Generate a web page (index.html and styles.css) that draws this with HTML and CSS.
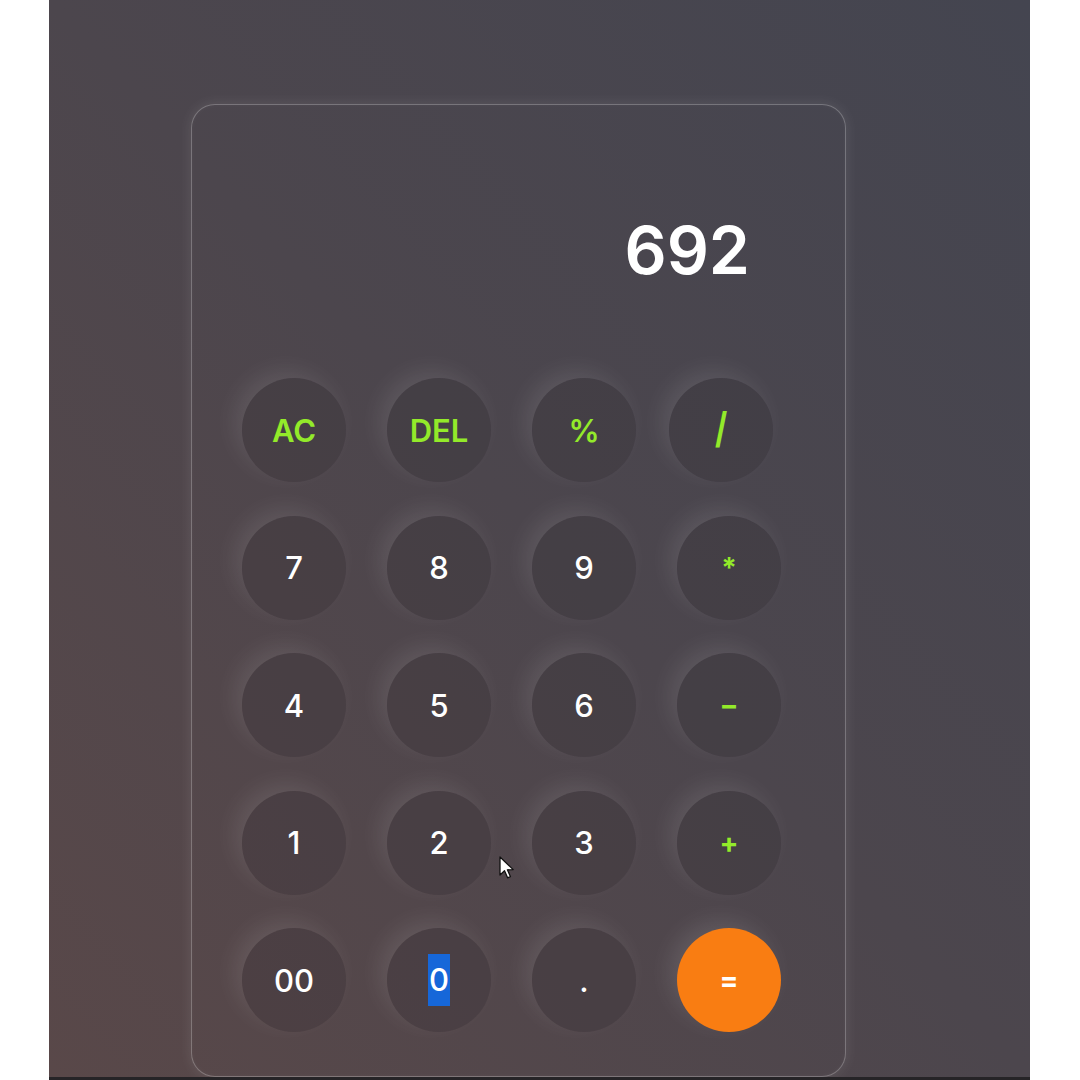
FILE: index.html
```html
<!DOCTYPE html>
<html>
<head>
<meta charset="utf-8">
<link rel="stylesheet" href="styles.css">
</head>
<body>
<div class="screen">
  <div class="stage">
    <div class="calc">
      <div class="display">692</div>
      <div class="keys">
        <button class="key op">AC</button>
        <button class="key op">DEL</button>
        <button class="key op">%</button>
        <button class="key op slash"><span class="slash-glyph">/</span></button>
        <button class="key">7</button>
        <button class="key">8</button>
        <button class="key">9</button>
        <button class="key op small">*</button>
        <button class="key">4</button>
        <button class="key">5</button>
        <button class="key">6</button>
        <button class="key op small">−</button>
        <button class="key">1</button>
        <button class="key">2</button>
        <button class="key">3</button>
        <button class="key op small">+</button>
        <button class="key">00</button>
        <button class="key"><span class="sel">0</span></button>
        <button class="key">.</button>
        <button class="key equal">=</button>
      </div>
    </div>
    <svg class="cursor" width="18" height="26" viewBox="0 0 18 26">
      <path d="M1 1 L1 19 L5.5 14.8 L8.6 21.8 L11.4 20.6 L8.4 13.8 L14.2 13.6 Z" fill="#fff" stroke="#111" stroke-width="1.3" stroke-linejoin="round"/>
    </svg>
  </div>
  <div class="bottombar"></div>
</div>
</body>
</html>
```

FILE: styles.css
```css
* { box-sizing: border-box; }
html, body { margin: 0; padding: 0; }
body {
  background: #ffffff;
  width: 1080px;
  height: 1080px;
  overflow: hidden;
  font-family: "Inter", "Open Sans", sans-serif;
}
.screen {
  margin: 0 50px 0 49px;
  height: 1080px;
  display: flex;
  flex-direction: column;
}
.stage {
  position: relative;
  flex: 1;
  background: linear-gradient(to top right, #594849 0%, #4c464d 50%, #444550 100%);
  padding: 104px 0 0 142px;
  overflow: hidden;
}
.bottombar {
  height: 3px;
  background: #262427;
}
.calc {
  width: 655px;
  height: 973px;
  border: 1.5px solid rgba(255,255,255,0.26);
  border-radius: 24px;
  background: rgba(255,255,255,0.005);
  box-shadow: 0 0 12px 2px rgba(255,255,255,0.08), inset 0 0 6px rgba(255,255,255,0.03);
  padding: 0 66px 0 50px;
}
.display {
  height: 273px;
  padding: 105px 29px 0 0;
  text-align: right;
  color: #ffffff;
  font-size: 66px;
  font-weight: 600;
  line-height: 80px;
  letter-spacing: 0;
}
.keys {
  display: grid;
  grid-template-columns: repeat(4, 104px);
  grid-auto-rows: 104px;
  column-gap: 41px;
  row-gap: 33.5px;
}
.key {
  width: 104px;
  height: 104px;
  border-radius: 50%;
  border: none;
  background: rgba(40, 34, 42, 0.2);
  box-shadow: -8px -8px 22px rgba(255,255,255,0.09);
  color: #ffffff;
  font-family: "Inter", "Open Sans", sans-serif;
  font-size: 31px;
  font-weight: 500;
  display: flex;
  align-items: center;
  justify-content: center;
  padding: 0;
}
.key.op {
  color: #93ea2a;
  font-weight: 600;
}
.key.small { font-size: 28px; font-weight: 700; }
.key.slash {
  transform: translateX(-8px);
}
.slash-glyph {
  display: inline-block;
  font-size: 42px;
  font-weight: 700;
  transform: scaleX(0.75);
  margin-top: -6px;
}
.key.equal {
  background: #f97d12;
  box-shadow: -8px -8px 22px rgba(255,255,255,0.1);
  font-size: 28px;
  font-weight: 700;
}
.sel {
  display: inline-block;
  background: #1667d9;
  line-height: 52px;
  padding: 0 1px;
}
.cursor {
  position: absolute;
  left: 450px;
  top: 856px;
}
```
